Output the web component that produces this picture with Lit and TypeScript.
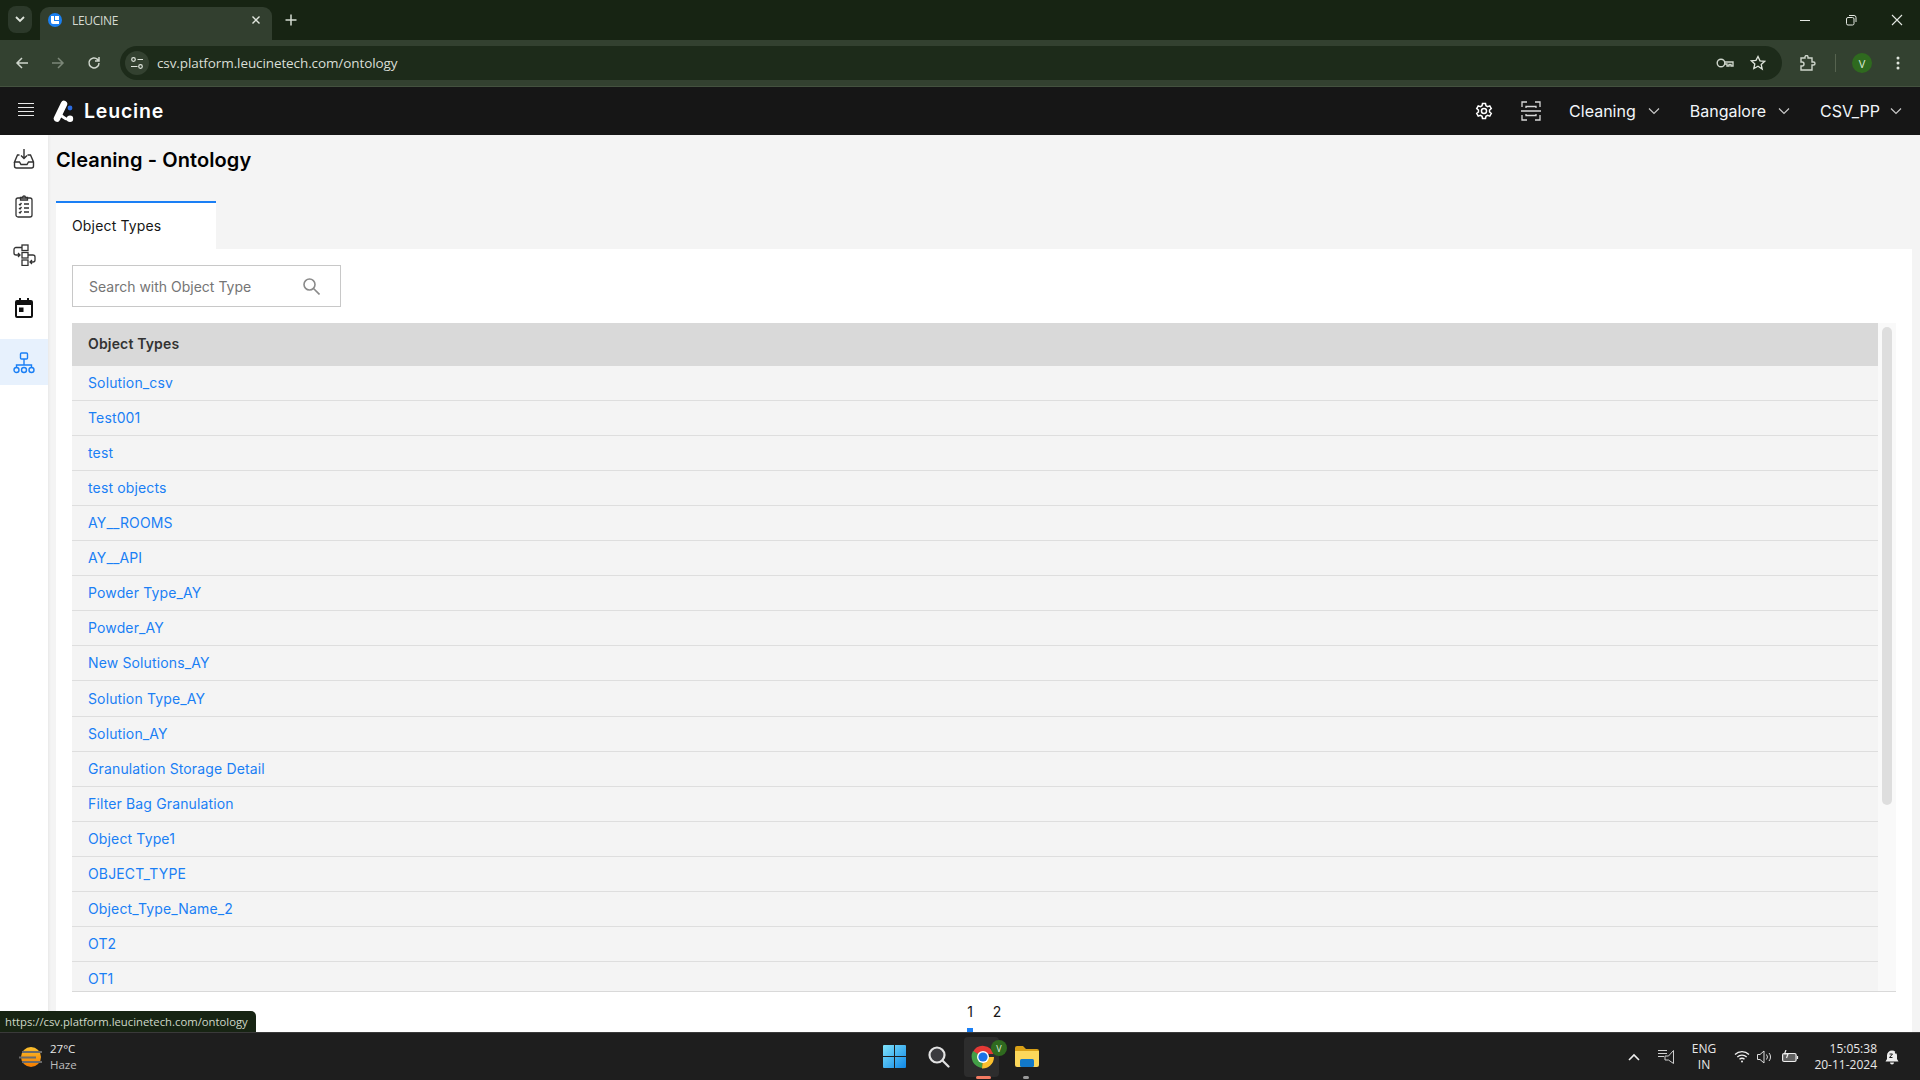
import { LitElement, html, css } from "lit";
import { customElement } from "lit/decorators.js";

const ROWS = ["Solution_csv","Test001","test","test objects","AY__ROOMS","AY__API","Powder Type_AY","Powder_AY","New Solutions_AY","Solution Type_AY","Solution_AY","Granulation Storage Detail","Filter Bag Granulation","Object Type1","OBJECT_TYPE","Object_Type_Name_2","OT2","OT1"];

const chev = html`<svg class="chev" width="12" height="8" viewBox="0 0 12 8" fill="none" stroke="#c9c9c9" stroke-width="1.2"><path d="M1 1.5l5 5 5-5"/></svg>`;

@customElement("app-root")
export class AppRoot extends LitElement {
  static styles = css`
    :host { display: block; width: 1920px; height: 1080px; overflow: hidden; position: relative; font-family: Inter, "Liberation Sans", sans-serif; background: #f4f4f4; }
    .page { display: flex; flex-direction: column; height: 1080px; }
    svg { display: block; flex: none; }

    .strip { height: 40px; background: #172413; display: flex; align-items: flex-end; padding-left: 8px; flex: none; }
    .tabsel { width: 24px; height: 27px; margin-bottom: 7px; background: #2c392a; border-radius: 8px; display: flex; align-items: center; justify-content: center; }
    .ctab { width: 232px; height: 33px; margin-left: 8px; background: #323f2f; border-radius: 9px 9px 0 0; display: flex; align-items: center; padding: 0 11px 7px 8px; box-sizing: border-box; color: #d5dbd2; font: 12px "Open Sans", "Liberation Sans", sans-serif; }
    .fav { width: 14px; height: 14px; border-radius: 50%; background: #1a7ff0; margin-right: 10px; display: flex; align-items: center; justify-content: center; }
    .ctab .t { flex: 1; letter-spacing: -0.3px; }
    .plus { margin: 0 0 14px 13px; }
    .winbtns { margin-left: auto; display: flex; height: 40px; align-items: center; padding-right: 15px; gap: 30px; }
    .winbtns svg { width: 16px; height: 16px; }

    .toolbar { height: 47px; flex: none; background: #334130; display: flex; align-items: center; box-sizing: border-box; border-bottom: 1px solid #44523f; }
    .tb { width: 36px; display: flex; justify-content: center; flex: none; }
    .back { margin-left: 4px; }
    .omni { margin-left: 8px; width: 1662px; height: 34px; border-radius: 17px; background: #1d2b1a; display: flex; align-items: center; color: #d9ded6; font: 13.5px "Open Sans", "Liberation Sans", sans-serif; letter-spacing: -0.1px; padding: 0 16px 0 5px; box-sizing: border-box; flex: none; }
    .site { width: 24px; height: 24px; border-radius: 50%; background: #334130; display: flex; align-items: center; justify-content: center; margin-right: 8px; }
    .url { flex: 1; }
    .omni .key { margin-right: 16px; }
    .ext { margin-left: 18px; }
    .sep { width: 1px; height: 18px; background: #56634f; margin-left: 19px; }
    .avatar { width: 20px; height: 20px; border-radius: 50%; background: #2f6a1f; color: #dcebd6; font: 11px "Open Sans", sans-serif; display: flex; align-items: center; justify-content: center; margin-left: 16px; }
    .dots { margin-left: 24px; }

    .nav { height: 48px; flex: none; background: #161616; display: flex; align-items: center; color: #f2f6fa; }
    .burger { margin-left: 18px; margin-bottom: 4px; }
    .logo { margin-left: 18px; }
    .brand { font-size: 19.5px; font-weight: 600; color: #fff; margin-left: 10px; letter-spacing: 0.8px; }
    .navr { margin-left: auto; display: flex; align-items: center; font-size: 16px; }
    .gear { margin-right: 28px; }
    .scan { margin-right: 28px; }
    .dd { display: flex; align-items: center; margin-right: 16px; }
    .dd .chev { margin-left: 12px; }
    .dd.b { margin-left: 14px; }
    .dd.c { margin-left: 14px; margin-right: 18px; }
    .dd.c .chev { margin-left: 10px; }

    .body { flex: 1; min-height: 0; display: flex; }
    .side { width: 48px; flex: none; background: #fff; display: flex; flex-direction: column; box-shadow: 1px 0 3px rgba(0,0,0,.06); }
    .si { height: 48px; flex: none; display: flex; align-items: center; justify-content: center; box-sizing: border-box; }
    .si.clip { padding-bottom: 1px; }
    .si.cal { height: 60px; padding-bottom: 2px; }
    .si.on { height: 46px; background: #e7f1fd; padding-top: 2px; padding-right: 1px; }
    .main { flex: 1; min-width: 0; display: flex; flex-direction: column; padding-left: 8px; padding-right: 8px; }
    h1 { margin: 13px 0 0; height: 24px; line-height: 24px; font-size: 20px; font-weight: 600; color: #000; letter-spacing: 0.1px; }
    .tabs { display: flex; margin-top: 29px; flex: none; }
    .tab { width: 160px; height: 48px; box-sizing: border-box; background: #fff; border-top: 2px solid #1a7ff5; display: flex; align-items: center; padding-left: 16px; padding-bottom: 2px; font-size: 14px; letter-spacing: 0.16px; color: #161616; }
    .panel { flex: 1; min-height: 0; background: #fff; display: flex; flex-direction: column; padding: 16px 16px 0; }
    .search { width: 269px; height: 42px; box-sizing: border-box; border: 1px solid #c8c8c8; display: flex; align-items: center; padding: 0 20px 0 16px; color: #757575; font-size: 14px; justify-content: space-between; flex: none; }
    .tablewrap { margin-top: 16px; height: 669px; flex: none; display: flex; border-bottom: 1px solid #d9d9d9; box-sizing: border-box; }
    .table { flex: 1; min-width: 0; overflow: hidden; }
    .th { height: 43px; box-sizing: border-box; padding-bottom: 2px; background: #d9d9d9; color: #333; font-size: 14px; font-weight: 600; letter-spacing: 0.16px; display: flex; align-items: center; padding-left: 16px; }
    .tr { height: 35px; box-sizing: border-box; background: #f4f4f4; border-bottom: 1px solid #dedede; display: flex; align-items: center; padding-left: 16px; padding-bottom: 1px; font-size: 14px; letter-spacing: 0.14px; color: #1a7ff5; }
    .tr.tall { height: 36px; }
    .track { width: 18px; flex: none; background: #f9f9f9; padding: 4px; box-sizing: border-box; }
    .thumb { width: 10px; height: 478px; border-radius: 5px; background: #dedede; }
    .pager { height: 40px; flex: none; display: flex; justify-content: center; font-size: 14px; color: #161616; position: relative; padding-right: 1px; padding-bottom: 1px; box-sizing: border-box; }
    .pg { width: 27px; display: flex; align-items: center; justify-content: center; position: relative; }
    .pg.on::after { content: ""; position: absolute; bottom: -1px; left: 10px; width: 6px; height: 4px; background: #1a7ff5; }

    .status { position: absolute; left: 0; bottom: 48px; width: 256px; height: 21px; box-sizing: border-box; background: #172413; border-radius: 0 5px 0 0; color: #cfd8c9; font: 11.3px "Open Sans", "Liberation Sans", sans-serif; display: flex; align-items: center; padding-left: 5px; white-space: nowrap; }

    .taskbar { height: 48px; flex: none; background: #1e1e1e; border-top: 1px solid #3a3a3a; box-sizing: border-box; display: flex; align-items: center; position: relative; font-family: "Open Sans", "Liberation Sans", sans-serif; color: #e8e8e8; font-size: 11.5px; }
    .wx { display: flex; align-items: center; margin-left: 19px; width: 200px; }
    .wx .txt { margin-left: 7px; line-height: 16px; }
    .wx .h { color: #bdbdbd; }
    .center { position: absolute; left: 873px; top: 0; height: 47px; display: flex; }
    .ti { width: 44px; display: flex; align-items: center; justify-content: center; position: relative; }
    .ti.win { margin-left: -1px; margin-right: 1px; }
    .ti .mark { position: absolute; bottom: 1px; left: 15px; width: 15px; height: 3px; border-radius: 2px; background: #f47b62; }
    .ti .mark.g { left: 18px; width: 6px; background: #9a9a9a; }
    .ti.act::before { content: ""; position: absolute; left: 3px; top: 4px; width: 35px; height: 40px; background: #2d2d2d; border-radius: 4px; }
    .ti svg { position: relative; }
    .vb { position: absolute; left: 30px; top: 7px; width: 16px; height: 16px; border-radius: 50%; background: #2f6a1f; color: #dcebd6; font-size: 9px; display: flex; align-items: center; justify-content: center; }
    .tray { margin-left: auto; display: flex; align-items: center; font-size: 12px; }
    .tray .lang { text-align: center; line-height: 16px; width: 30px; margin: 0 15px 0 14px; }
    .tray .clock { text-align: right; line-height: 16px; width: 78px; }
    .wifi { margin-right: 7px; }
    .spk { margin-right: 9px; }
    .caret { margin-right: 18px; }
    .bell { margin: 0 20px 0 8px; }
  `;

  render() {
    return html`<div class="page">
      <div class="strip">
        <div class="tabsel"><svg width="10" height="7" viewBox="0 0 10 7" fill="none" stroke="#dfe5dc" stroke-width="1.8"><path d="M1 1l4 4 4-4"/></svg></div>
        <div class="ctab">
          <div class="fav"><svg width="8" height="8" viewBox="0 0 8 8" fill="#fff"><path d="M0 0h3v5h5v3H2a2 2 0 0 1-2-2zM4 0h4v4H4z"/></svg></div>
          <span class="t">LEUCINE</span>
          <svg width="10" height="10" viewBox="0 0 10 10" stroke="#e2e7df" stroke-width="1.4"><path d="M1.5 1.5l7 7M8.5 1.5l-7 7"/></svg>
        </div>
        <svg class="plus" width="12" height="12" viewBox="0 0 12 12" stroke="#d5dbd2" stroke-width="1.5"><path d="M6 .5v11M.5 6h11"/></svg>
        <div class="winbtns">
          <svg viewBox="0 0 16 16" stroke="#e4e8e2" fill="none"><path d="M3 8.5h10"/></svg>
          <svg viewBox="0 0 16 16" stroke="#e4e8e2" fill="none"><rect x="3.5" y="5.5" width="7.5" height="7.5" rx="1.5"/><path d="M6 3.5h5a2 2 0 0 1 2 2V10"/></svg>
          <svg viewBox="0 0 16 16" stroke="#e4e8e2" fill="none" stroke-width="1.1"><path d="M3 3l10 10M13 3L3 13"/></svg>
        </div>
      </div>

      <div class="toolbar">
        <div class="tb back"><svg width="14" height="14" viewBox="0 0 14 14" fill="none" stroke="#cfd6cc" stroke-width="1.5"><path d="M13 7H2M7 2L2 7l5 5"/></svg></div>
        <div class="tb"><svg width="14" height="14" viewBox="0 0 14 14" fill="none" stroke="#7c8778" stroke-width="1.5"><path d="M1 7h11M7 2l5 5-5 5"/></svg></div>
        <div class="tb"><svg width="14" height="14" viewBox="0 0 14 14" fill="none" stroke="#cfd6cc" stroke-width="1.5"><path d="M12 7a5 5 0 1 1-1.5-3.6L12 5M12 1v4H8"/></svg></div>
        <div class="omni">
          <div class="site"><svg width="14" height="14" viewBox="0 0 14 14" fill="none" stroke="#dfe5dc" stroke-width="1.2"><circle cx="3.5" cy="3.5" r="1.8"/><circle cx="10.5" cy="10.5" r="1.8"/><path d="M7.5 3.5H13M1 10.5h6.5"/></svg></div>
          <span class="url">csv.platform.leucinetech.com/ontology</span>
          <svg class="key" width="18" height="12" viewBox="0 0 18 12" fill="none" stroke="#cfd6cc" stroke-width="1.4"><circle cx="5" cy="6" r="3.8"/><path d="M9 5h8v4h-2V7.5h-2V9h-2V7H9"/></svg>
          <svg width="16" height="16" viewBox="0 0 16 16" fill="none" stroke="#dfe5dc" stroke-width="1.3"><path d="M8 1.500l2 4.300 4.700.5-3.500 3.200 1 4.600L8 11.300 3.800 13.600l1-4.600-3.500-3.200 4.700-.5z"/></svg>
        </div>
        <svg class="ext" width="16" height="16" viewBox="0 0 16 16" fill="none" stroke="#cfd6cc" stroke-width="1.4"><path d="M1 3h4V2a1.500 1.500 0 0 1 3 0v1h4v4h1.500a1.500 1.500 0 0 1 0 3H12v5H1v-4h1a2 2 0 0 0 0-4H1z"/></svg>
        <div class="sep"></div>
        <div class="avatar">V</div>
        <svg class="dots" width="4" height="14" viewBox="0 0 4 14" fill="#dfe5dc"><circle cx="2" cy="2" r="1.500"/><circle cx="2" cy="7" r="1.500"/><circle cx="2" cy="12" r="1.500"/></svg>
      </div>

      <div class="nav">
        <svg class="burger" width="16" height="13" viewBox="0 0 16 13" stroke="#e8e8e8" stroke-width="1"><path d="M0 .5h16M0 4.500h16M0 8.500h16M0 12.500h16"/></svg>
        <svg class="logo" width="22" height="23" viewBox="0 0 22 23" fill="#fff"><path d="M12 4L5 18.500" fill="none" stroke="#fff" stroke-width="6.500" stroke-linecap="round"/><path d="M8 15c3 1 4 4.500 9 4.500" fill="none" stroke="#fff" stroke-width="3"/><circle cx="18" cy="18.800" r="3.200"/><circle cx="18" cy="8" r="2.400" fill="#2b6be0"/></svg>
        <span class="brand">Leucine</span>
        <div class="navr">
          <svg class="gear" width="18" height="18" viewBox="0 0 24 24" fill="none" stroke="#fff" stroke-width="2"><circle cx="12" cy="12" r="3.400"/><path d="M10 2h4l.6 3 2.200 1.200 2.900-1 2 3.500-2.300 2v2.600l2.300 2-2 3.500-2.900-1L14.600 19l-.6 3h-4l-.6-3-2.200-1.200-2.900 1-2-3.500 2.300-2v-2.600l-2.300-2 2-3.500 2.900 1L9.400 5z"/></svg>
          <svg class="scan" width="20" height="20" viewBox="0 0 20 20" fill="none" stroke="#d8d8d8" stroke-width="1.300"><path d="M1 6V1h5M14 1h5v5M19 14v5h-5M6 19H1v-5M0 10h20M5 7V5.500h10V7M5 13v1.500h10V13"/></svg>
          <div class="dd">Cleaning${chev}</div>
          <div class="dd b">Bangalore${chev}</div>
          <div class="dd c">CSV_PP${chev}</div>
        </div>
      </div>

      <div class="body">
        <div class="side">
          <div class="si"><svg width="22" height="22" viewBox="0 0 22 22" fill="none" stroke="#333" stroke-width="1.400"><path d="M1.500 14v4a2 2 0 0 0 2 2h15a2 2 0 0 0 2-2v-4l-3-7h-3M6.500 7h-2l-3 7h5l1.500 2.500h6l1.500-2.500h5M11 1v9M8 7.500l3 3 3-3"/></svg></div>
          <div class="si clip"><svg width="18" height="23" viewBox="0 0 18 23" fill="none" stroke="#333" stroke-width="1.300"><rect x="1" y="3" width="16" height="19" rx="2"/><path d="M5.500 5V2.500H7.500a1.500 1.500 0 0 1 3 0h2V5zM4 9l1 1 1.500-2M9 9h5M4 13l1 1 1.500-2M9 13h5M4 17l1 1 1.500-2M9 17h5"/></svg></div>
          <div class="si"><svg width="23" height="22" viewBox="0 0 23 22" fill="none" stroke="#333" stroke-width="1.300"><rect x="9" y="1" width="6" height="5.500"/><rect x="9" y="8.500" width="6" height="5.500"/><rect x="9" y="16" width="6" height="5.500"/><path d="M9 3.500H3a2 2 0 0 0-2 2V9a2 2 0 0 0 2 2h4M5 9l2 2-2 2M15 11h5a2 2 0 0 1 2 2v3a2 2 0 0 1-2 2h-3M19 16l-2 2 2 2"/></svg></div>
          <div class="si cal"><svg width="18" height="20" viewBox="0 0 18 20" fill="#111"><path d="M4 0h2v2h6V0h2v2h2a2 2 0 0 1 2 2v14a2 2 0 0 1-2 2H2a2 2 0 0 1-2-2V4a2 2 0 0 1 2-2h2zM2 7v11h14V7zM4 9.500h4.500V14H4z" fill-rule="evenodd"/></svg></div>
          <div class="si on"><svg width="22" height="22" viewBox="0 0 22 22" fill="none" stroke="#1a7ff5" stroke-width="1.400"><rect x="7.500" y="1" width="7" height="6" rx="1"/><path d="M11 7v6M3.500 16v-3h15v3"/><circle cx="3.500" cy="18" r="2.500"/><circle cx="11" cy="18" r="2.500"/><circle cx="18.500" cy="18" r="2.500"/></svg></div>
        </div>
        <div class="main">
          <h1>Cleaning - Ontology</h1>
          <div class="tabs"><div class="tab">Object Types</div></div>
          <div class="panel">
            <div class="search">
              <span>Search with Object Type</span>
              <svg width="17" height="17" viewBox="0 0 17 17" fill="none" stroke="#8a8a8a" stroke-width="1.600"><circle cx="6.500" cy="6.500" r="5.500"/><path d="M10.500 10.500l6 6"/></svg>
            </div>
            <div class="tablewrap">
              <div class="table">
                <div class="th">Object Types</div>
                ${ROWS.map((r, i) => html`<div class="tr ${i === 9 ? "tall" : ""}">${r}</div>`)}
              </div>
              <div class="track"><div class="thumb"></div></div>
            </div>
            <div class="pager">
              <div class="pg on">1</div>
              <div class="pg">2</div>
            </div>
          </div>
        </div>
      </div>

      <div class="taskbar">
        <div class="wx">
          <svg width="24" height="22" viewBox="0 0 24 22"><defs><linearGradient id="sun" x1="0" y1="0" x2="0" y2="1"><stop offset="0" stop-color="#fbc02d"/><stop offset="1" stop-color="#f57c00"/></linearGradient></defs><circle cx="12" cy="11" r="10" fill="url(#sun)"/><path d="M3 6h20M0 11.500h17M3 16h20" stroke="#6b6b6b" stroke-width="2"/></svg>
          <div class="txt"><div>27°C</div><div class="h">Haze</div></div>
        </div>
        <div class="center">
          <div class="ti win"><svg width="23" height="23" viewBox="0 0 23 23"><defs><linearGradient id="w" x1="0" y1="0" x2="1" y2="1"><stop offset="0" stop-color="#7fe3fb"/><stop offset="1" stop-color="#0f87e6"/></linearGradient></defs><path fill="url(#w)" d="M0 1a1 1 0 0 1 1-1h10v11H0zM12 0h10a1 1 0 0 1 1 1v10H12zM0 12h11v11H1a1 1 0 0 1-1-1zM12 12h11v10a1 1 0 0 1-1 1H12z"/></svg></div>
          <div class="ti"><svg width="22" height="22" viewBox="0 0 22 22" fill="#3a3a3e" stroke="#e2e2e2" stroke-width="2.200"><circle cx="9" cy="9" r="7.500"/><path d="M14.500 14.500l6 6" stroke-linecap="round"/></svg></div>
          <div class="ti act">
            <svg width="24" height="24" viewBox="0 0 24 24"><path d="M12 12L2 7A11 11 0 0 1 22.500 9H12z" fill="#e53935"/><path d="M12 12l-1 11A11.500 11.500 0 0 1 2 6z" fill="#43a047"/><path d="M12 12h11A11.500 11.500 0 0 1 11 23.500z" fill="#fbc02d"/><circle cx="12" cy="12" r="6" fill="#fff"/><circle cx="12" cy="12" r="4.600" fill="#1a73e8"/></svg>
            <div class="vb">V</div>
            <div class="mark"></div>
          </div>
          <div class="ti">
            <svg width="24" height="21" viewBox="0 0 24 21"><path d="M0 2a2 2 0 0 1 2-2h6l3 3h11a2 2 0 0 1 2 2v3H0z" fill="#d9a016"/><path d="M0 5h24v14a2 2 0 0 1-2 2H2a2 2 0 0 1-2-2z" fill="#fbd75b"/><rect x="5" y="13" width="14" height="8" rx="1.500" fill="#1279c9"/></svg>
            <div class="mark g"></div>
          </div>
        </div>
        <div class="tray">
          <svg class="caret" width="12" height="8" viewBox="0 0 12 8" fill="none" stroke="#eee" stroke-width="1.600"><path d="M1 7l5-5 5 5"/></svg>
          <svg width="17" height="17" viewBox="0 0 17 17" fill="none" stroke="#cfcfcf"><path d="M0 2.500h9M0 5.500h9M0 8.500h6M15.500 2.500v13l-5-3.500H7V8h3.500z"/></svg>
          <div class="lang">ENG<br />IN</div>
          <svg class="wifi" width="16" height="13" viewBox="0 0 16 13" fill="none" stroke="#eee" stroke-width="1.300"><path d="M1 4.500a10 10 0 0 1 14 0M3.300 7a7 7 0 0 1 9.400 0M5.500 9.300a3.500 3.500 0 0 1 5 0"/><circle cx="8" cy="11.500" r="1" fill="#eee" stroke="none"/></svg>
          <svg class="spk" width="16" height="14" viewBox="0 0 16 14" fill="none" stroke="#ddd"><path d="M.5 4.500H3L7 1v12L3 9.500H.5zM9.500 4.500a4 4 0 0 1 0 5M12 3a6 6 0 0 1 0 8"/></svg>
          <svg width="17" height="13" viewBox="0 0 17 13" fill="none" stroke="#eee" stroke-width="1.200"><rect x=".6" y="3.500" width="13.500" height="8" rx="1.500" fill="#ddd" fill-opacity=".35"/><path d="M15.500 6v3M4 0L2.500 4H6L4.500 8"/></svg>
          <div class="clock">15:05:38<br />20-11-2024</div>
          <svg class="bell" width="15" height="17" viewBox="0 0 15 17" fill="#eee"><path d="M7 2.500a5 5 0 0 1 5 5V11l1.500 2.500H.5L2 11V7.500a5 5 0 0 1 5-5zM5 14.500h4a2 2 0 0 1-4 0z"/><path d="M4.500 6h3l-3 3.500h3M10 1h3.500L10 5h3.500" fill="none" stroke="#1e1e1e" stroke-width="1"/></svg>
        </div>
      </div>
    </div>
    <div class="status">https://csv.platform.leucinetech.com/ontology</div>`;
  }
}
